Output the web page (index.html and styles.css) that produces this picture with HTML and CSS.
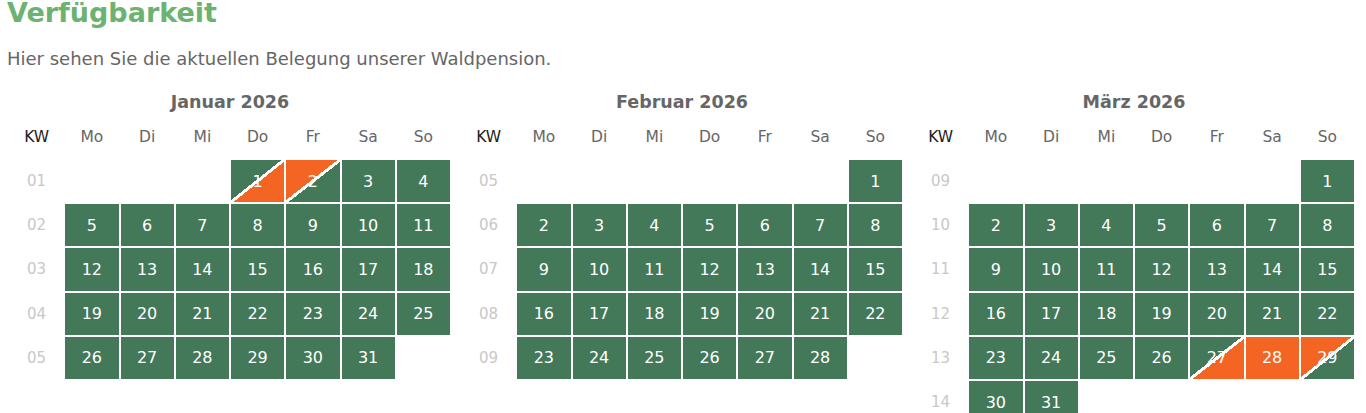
FILE: index.html
```html
<!DOCTYPE html>
<html lang="de">
<head>
<meta charset="utf-8">
<title>Verfügbarkeit</title>
<link rel="stylesheet" href="styles.css">
</head>
<body>
<div class="page">
  <h1 class="title">Verfügbarkeit</h1>
  <p class="intro">Hier sehen Sie die aktuellen Belegung unserer Waldpension.</p>
  <div class="months">
    <table class="cal">
      <caption>Januar 2026</caption>
      <thead><tr><th class="kw">KW</th><th>Mo</th><th>Di</th><th>Mi</th><th>Do</th><th>Fr</th><th>Sa</th><th>So</th></tr></thead>
      <tbody>
        <tr><td class="wk">01</td><td></td><td></td><td></td><td class="day arr">1</td><td class="day dep">2</td><td class="day">3</td><td class="day">4</td></tr>
        <tr><td class="wk">02</td><td class="day">5</td><td class="day">6</td><td class="day">7</td><td class="day">8</td><td class="day">9</td><td class="day">10</td><td class="day">11</td></tr>
        <tr><td class="wk">03</td><td class="day">12</td><td class="day">13</td><td class="day">14</td><td class="day">15</td><td class="day">16</td><td class="day">17</td><td class="day">18</td></tr>
        <tr><td class="wk">04</td><td class="day">19</td><td class="day">20</td><td class="day">21</td><td class="day">22</td><td class="day">23</td><td class="day">24</td><td class="day">25</td></tr>
        <tr><td class="wk">05</td><td class="day">26</td><td class="day">27</td><td class="day">28</td><td class="day">29</td><td class="day">30</td><td class="day">31</td><td></td></tr>
      </tbody>
    </table>
    <table class="cal">
      <caption>Februar 2026</caption>
      <thead><tr><th class="kw">KW</th><th>Mo</th><th>Di</th><th>Mi</th><th>Do</th><th>Fr</th><th>Sa</th><th>So</th></tr></thead>
      <tbody>
        <tr><td class="wk">05</td><td></td><td></td><td></td><td></td><td></td><td></td><td class="day">1</td></tr>
        <tr><td class="wk">06</td><td class="day">2</td><td class="day">3</td><td class="day">4</td><td class="day">5</td><td class="day">6</td><td class="day">7</td><td class="day">8</td></tr>
        <tr><td class="wk">07</td><td class="day">9</td><td class="day">10</td><td class="day">11</td><td class="day">12</td><td class="day">13</td><td class="day">14</td><td class="day">15</td></tr>
        <tr><td class="wk">08</td><td class="day">16</td><td class="day">17</td><td class="day">18</td><td class="day">19</td><td class="day">20</td><td class="day">21</td><td class="day">22</td></tr>
        <tr><td class="wk">09</td><td class="day">23</td><td class="day">24</td><td class="day">25</td><td class="day">26</td><td class="day">27</td><td class="day">28</td><td></td></tr>
      </tbody>
    </table>
    <table class="cal">
      <caption>März 2026</caption>
      <thead><tr><th class="kw">KW</th><th>Mo</th><th>Di</th><th>Mi</th><th>Do</th><th>Fr</th><th>Sa</th><th>So</th></tr></thead>
      <tbody>
        <tr><td class="wk">09</td><td></td><td></td><td></td><td></td><td></td><td></td><td class="day">1</td></tr>
        <tr><td class="wk">10</td><td class="day">2</td><td class="day">3</td><td class="day">4</td><td class="day">5</td><td class="day">6</td><td class="day">7</td><td class="day">8</td></tr>
        <tr><td class="wk">11</td><td class="day">9</td><td class="day">10</td><td class="day">11</td><td class="day">12</td><td class="day">13</td><td class="day">14</td><td class="day">15</td></tr>
        <tr><td class="wk">12</td><td class="day">16</td><td class="day">17</td><td class="day">18</td><td class="day">19</td><td class="day">20</td><td class="day">21</td><td class="day">22</td></tr>
        <tr><td class="wk">13</td><td class="day">23</td><td class="day">24</td><td class="day">25</td><td class="day">26</td><td class="day arr">27</td><td class="day full">28</td><td class="day dep">29</td></tr>
        <tr><td class="wk">14</td><td class="day">30</td><td class="day">31</td><td></td><td></td><td></td><td></td><td></td></tr>
      </tbody>
    </table>
  </div>
</div>
</body>
</html>
```
FILE: styles.css
```css
html, body {
  margin: 0;
  padding: 0;
  background: #fff;
}
body {
  font-family: "DejaVu Sans", "Liberation Sans", sans-serif;
  color: #666;
}
.page {
  padding: 0 8px;
}
.title {
  margin: -5px 0 0 -1px;
  font-size: 27px;
  line-height: 36px;
  font-weight: bold;
  color: #6cb270;
}
.intro {
  margin: 17px 0 0 -1px;
  font-size: 18px;
  line-height: 22px;
  color: #666;
}
.months {
  display: flex;
  align-items: flex-start;
  gap: 8px;
  margin-top: 22px;
}
.cal {
  width: 444px;
  table-layout: fixed;
  border-collapse: separate;
  border-spacing: 2px;
  margin: -2px 0 0 0;
}
.cal caption {
  font-size: 17.5px;
  font-weight: bold;
  line-height: 24px;
  color: #666;
  text-align: center;
}
.cal th {
  height: 42px;
  padding: 0;
  font-size: 15.5px;
  font-weight: normal;
  color: #666;
  text-align: center;
}
.cal th.kw {
  color: #222;
}
.cal td {
  height: 42.2px;
  padding: 0;
  text-align: center;
  font-size: 16px;
}
.cal td.wk {
  color: #c8c8c8;
  font-size: 15px;
}
.cal td.day {
  background: #437859;
  color: #fff;
}
.cal td.full {
  background: #f46524;
}
.cal td.arr {
  background: linear-gradient(to bottom right, #437859 calc(50% - 1.5px), #fff calc(50% - 1.5px), #fff calc(50% + 1.5px), #f46524 calc(50% + 1.5px));
}
.cal td.dep {
  background: linear-gradient(to bottom right, #f46524 calc(50% - 1.5px), #fff calc(50% - 1.5px), #fff calc(50% + 1.5px), #437859 calc(50% + 1.5px));
}
```
